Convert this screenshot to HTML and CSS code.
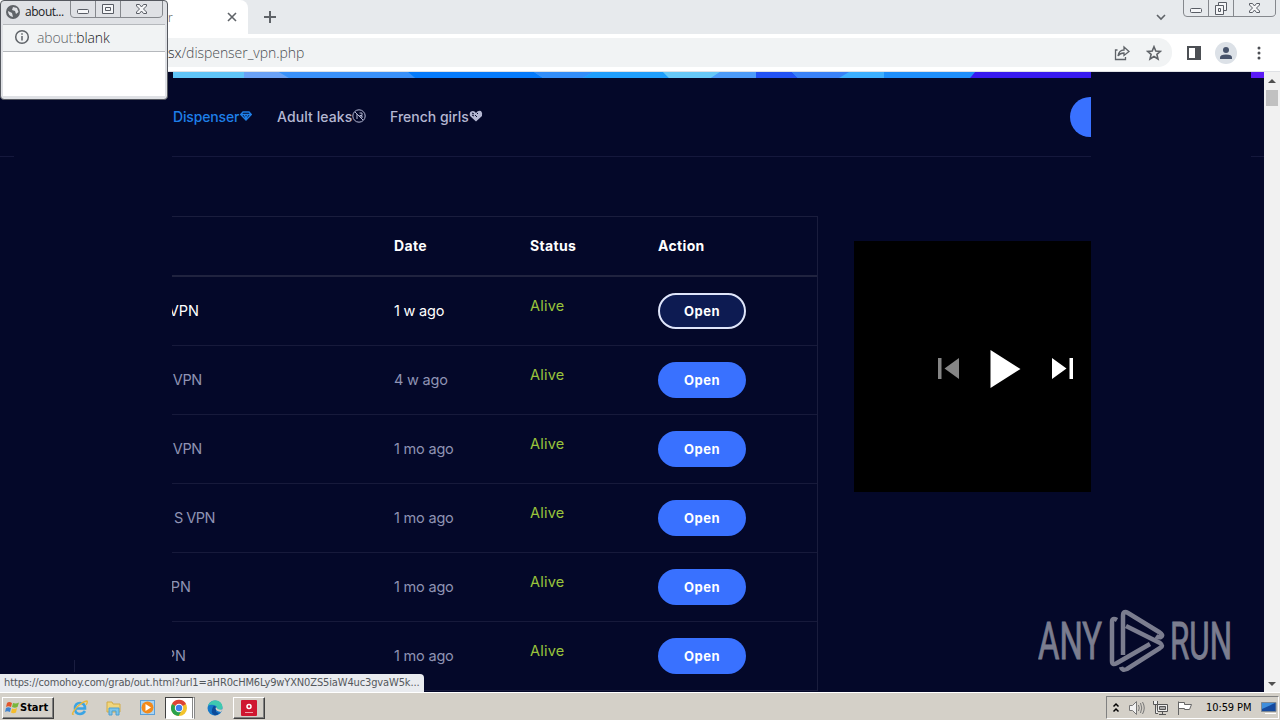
FILE: index.html
```
<!DOCTYPE html>
<html lang="en">
  <head>
    <meta charset="UTF-8" />
    <meta name="viewport" content="width=device-width, initial-scale=1.0" />
    <title>Dispenser</title>
    <link rel="stylesheet" href="styles.css">
  </head>
  <body>
    <header class="tabstrip">
      <div class="tab">
        <span class="tab-title">r</span>
        <svg class="tab-close" width="10" height="10"><path d="M1 1L9 9M9 1L1 9" /></svg>
      </div>
      <svg class="new-tab" width="14" height="14"><path d="M7 1V13M1 7H13" /></svg>
      <svg class="tab-search" width="12" height="8"><path d="M2 2L6 6L10 2" /></svg>
      <div class="win-buttons">
        <svg width="94" height="17">
          <path class="frame" d="M.5 0V13Q.5 16.5 4 16.5H88Q92.500 16.500 92.500 13V0M25.500 0V16M50.500 0V16" />
          <rect class="glyph" x="7.500" y="8.500" width="11" height="4" rx="1" />
          <path class="glyph" d="M35.500 5V2.500H43.500V10.500H41M32.500 5.500H40.500V14.500H32.500ZM35.500 8.500H37.500V11.500H35.500Z" />
          <path class="glyph" d="M66.500 3.500H69.500L71.500 6L73.500 3.500H76.500V5L73.500 8L76.500 11V12.500H73.500L71.500 10L69.500 12.500H66.500V11L69.500 8L66.500 5Z" />
        </svg>
      </div>
    </header>
    <div class="toolbar">
      <div class="omnibox">
        <span class="url"><b>sx</b>/dispenser_vpn.php</span>
        <svg class="share" width="16" height="16"><path d="M3.500 5H1.500V14.500H11.500V12M4 11Q5 5 10 5V2L15 6.500L10 10.500V8Q6 8 4 11Z" /></svg>
        <svg class="star" width="16" height="16"><path d="M8 1.700L9.800 6L14.400 6.400L10.900 9.400L12 14L8 11.500L4 14L5.100 9.400L1.600 6.400L6.200 6Z" /></svg>
      </div>
      <svg class="side-panel" width="14" height="14"><path d="M1 1H13V13H1Z" /><path class="fill" d="M9 1H13V13H9Z" /></svg>
      <div class="avatar">
        <svg width="14" height="14"><circle cx="7" cy="4" r="3" /><path d="M1 13V11.500Q1 8.500 7 8.500T13 11.500V13Z" /></svg>
      </div>
      <svg class="kebab" width="4" height="14"><circle cx="2" cy="2" r="1.500" /><circle cx="2" cy="7" r="1.500" /><circle cx="2" cy="12" r="1.500" /></svg>
    </div>

    <div class="viewport">
      <aside class="side left"><i class="edge"></i><i class="tick"></i></aside>
      <main class="page">
        <svg class="ribbon" width="918" height="6">
          <rect width="918" height="6" fill="#3db0ff" />
          <path d="M0 0H71V6H0Z" fill="#60c5f8" />
          <path d="M71 0H106L116 6H71Z" fill="#6ba2f6" />
          <path d="M106 0H235L242 6H116Z" fill="#3a91fa" />
          <path d="M235 0H361L370 6H242Z" fill="#067bfb" />
          <path d="M361 0H420L410 6H370Z" fill="#348ffa" />
          <path d="M420 0H490L496 6H410Z" fill="#209ffc" />
          <path d="M490 0H547L538 6H496Z" fill="#67c9f8" />
          <path d="M547 0H583V6H538Z" fill="#4d9cfa" />
          <path d="M583 0H619L625 6H583Z" fill="#2353f5" />
          <path d="M619 0H676L666 6H625Z" fill="#3a82f8" />
          <path d="M711 0H802L797 6H711Z" fill="#1e8ffb" />
          <path d="M802 0H918V6H797Z" fill="#381af0" />
        </svg>
        <nav class="nav">
          <a class="active">Dispenser
            <svg width="12" height="10"><path d="M3 1H9L11.300 3.500L6 9L.7 3.500ZM1 3.500H11M4 3.500L6 7L8 3.500" /></svg></a>
          <a class="adult">Adult leaks
            <svg width="14" height="14"><circle cx="7" cy="7" r="6.200" /><path d="M3 3L11 11M5 5V10M7.500 4H10V6.500H7.500M8 7H10V9" /></svg></a>
          <a class="french">French girls
            <svg class="heart" width="14" height="12"><path d="M7 11.500L1 6Q0 3 2 1.500Q5 0 7 3Q9 0 12 1Q14 3 13 6Z" /><path class="cut" d="M3 3L5 4M3 5L5 6M6 5L8 7M8 3L9 4" /></svg></a>
          <button class="pill"></button>
        </nav>
        <div class="content">
          <div class="table">
            <div class="row head"><span></span><span>Date</span><span>Status</span><span>Action</span></div>
            <div class="row hover"><span class="name w27">VPN</span><span class="date">1 w ago</span><span class="status">Alive</span><button class="open">Open</button></div>
            <div class="row"><span class="name w30">VPN</span><span class="date">4 w ago</span><span class="status">Alive</span><button class="open">Open</button></div>
            <div class="row"><span class="name w30">VPN</span><span class="date">1 mo ago</span><span class="status">Alive</span><button class="open">Open</button></div>
            <div class="row"><span class="name w43">S VPN</span><span class="date">1 mo ago</span><span class="status">Alive</span><button class="open">Open</button></div>
            <div class="row"><span class="name w19">PN</span><span class="date">1 mo ago</span><span class="status">Alive</span><button class="open">Open</button></div>
            <div class="row"><span class="name w14">PN</span><span class="date">1 mo ago</span><span class="status">Alive</span><button class="open">Open</button></div>
          </div>
          <div class="player">
            <svg width="237" height="251">
              <path fill="#858585" d="M84 117H87.500V138H84ZM105 117V138L90.500 127.500Z" />
              <path fill="#fff" d="M136.500 109V147L166.500 128ZM198 117V138L212.500 127.500ZM215.500 117H219V138H215.500Z" />
            </svg>
          </div>
        </div>
      </main>
      <aside class="side right"><i class="corner"></i><i class="edge"></i></aside>
      <div class="scrollbar">
        <svg width="16" height="16"><path d="M4 11L8 7L12 11Z" /></svg>
        <div class="thumb"></div>
        <svg class="down" width="16" height="16"><path d="M4 6L8 10L12 6Z" /></svg>
      </div>
      <svg class="watermark" width="200" height="66">
        <text x="0" y="50" textLength="64" lengthAdjust="spacingAndGlyphs">ANY</text>
        <path d="M79 11Q74 8 74 13V52Q74 57 79 54L112 35M85 46V7Q85 1 90 4L121 23Q126 26 123 28Q121 29 118 27M88 17L122 34Q126 37 122 39L89 60Q84 62 83 58" />
        <text x="132" y="50" textLength="62" lengthAdjust="spacingAndGlyphs">RUN</text>
      </svg>
      <div class="link-status">https://comohoy.com/grab/out.html?url1=aHR0cHM6Ly9wYXN0ZS5iaW4uc3gvaW5k...</div>
    </div>

    <footer class="taskbar">
      <div class="start">
        <svg width="16" height="16">
          <path fill="#e2562b" d="M3 3Q5 1 8 3L7 7Q4 5.500 2 7Z" />
          <path fill="#79b63b" d="M9 3Q12 4 15 2.500L13.500 7Q11 8.500 8 7Z" />
          <path fill="#3f83cf" d="M2 8Q4 6.500 7 8L6 12Q3 10.500 1 12Z" />
          <path fill="#f5bd2c" d="M8 8.500Q10 9.500 13 8L12 12.500Q9 14 7 12.500Z" />
        </svg>
        Start
      </div>
      <div class="quick">
        <div class="task">
          <svg width="18" height="18"><path d="M14 12Q12 15 9 15Q4 15 4 9.500T9 4Q14 4 14 9.500H5" fill="none" stroke="#3ba4e4" stroke-width="2.600" /><path d="M3 15Q-1 17 5 9Q12 2 16 2Q17 3 15 6" fill="none" stroke="#e8b83c" stroke-width="1.300" /></svg>
        </div>
        <div class="task">
          <svg width="18" height="18"><path d="M2 3H7L8 5H15V13H2Z" fill="#f1d67c" stroke="#d2ac48" /><path d="M4 16V9H14V16H11V12H7V16Z" fill="#7cc5ea" stroke="#4d9fd0" /></svg>
        </div>
        <div class="task">
          <svg width="18" height="18"><rect x="1.500" y="1.500" width="14" height="14" fill="#a9d4f3" stroke="#5b9fd8" /><circle cx="8.500" cy="8.500" r="6" fill="#f28a1c" /><path d="M6.500 5L12 8.500L6.500 12Z" fill="#fff" /></svg>
        </div>
        <div class="task pressed">
          <svg width="18" height="18"><circle cx="9" cy="9" r="8" fill="#f3c32d" /><path d="M9 9L2 5A8 8 0 0 1 16 5Z" fill="#dd4436" /><path d="M9 9L2 5A8 8 0 0 0 8.500 17L12 11Z" fill="#2ba24c" /><circle cx="9" cy="9" r="4.200" fill="#fff" /><circle cx="9" cy="9" r="3.200" fill="#3e80ee" /></svg>
        </div>
        <div class="task edge-icon">
          <svg width="18" height="18"><circle cx="9" cy="9" r="7.500" fill="#1779c9" /><path d="M2 7Q4 1 10 1.500Q16 2 16.500 8Q16 12 11 11Q12 7 8 6Q4 5 2 7Z" fill="#3fc9b0" /><path d="M11 11Q8 13 13 14Q11 17 8 16Q4 13 7 8Q8 6 10 8Q9 10 11 11Z" fill="#0c4a98" /><path d="M10 8Q8 12 15 13L17 10Q12 12 10 8Z" fill="#d4d0c8" /></svg>
        </div>
        <div class="task raised">
          <svg width="16" height="16"><rect width="16" height="16" rx="1" fill="#cf1730" /><circle cx="8" cy="6.500" r="2" fill="none" stroke="#fff" stroke-width="1.500" /><path d="M4 12.500H12" stroke="#f0a0aa" /></svg>
        </div>
      </div>
      <div class="tray">
        <svg class="chevrons" width="8" height="12"><path d="M1.500 4.500L4 2L6.500 4.500M1.500 9.500L4 7L6.500 9.500" /></svg>
        <svg class="sound" width="18" height="16"><path d="M1.500 5.500H4.500L8.500 1.500V14.500L4.500 10.500H1.500Z" /><path class="wave" d="M10.500 5Q12 8 10.500 11M12.500 3Q15 8 12.500 13M14.500 2Q18 8 14.500 14" /></svg>
        <svg class="net" width="18" height="16"><path d="M5.500 4.500H15.500V11.500H5.500Z" /><path d="M7.500 6.500H13.500V9.500H7.500Z" fill="#aaa" /><path d="M7 14.500H14M10.500 12V14M1.500 1V4.500H5.500V1M3.500 5V13.500H6" /></svg>
        <svg class="flag" width="18" height="16"><path d="M2.500 15V1.500M2.500 2.500H8.500V4.500H15.500L13.500 9.500H8.500V8.500H2.500" /></svg>
        <span class="clock">10:59 PM</span>
        <svg class="desktop" width="16" height="14"><path fill="#164a9e" stroke="#7c8894" d="M.5 1.500H15V10.500H.5Z" /><path fill="#3f8edc" d="M1 2H14L1 8Z" /><path d="M4 12.500H15" stroke="#fff" /></svg>
      </div>
    </footer>

    <!-- small blank window over the browser -->
    <section class="popup">
      <div class="popup-title">
        <svg class="globe" width="14" height="14"><circle cx="7" cy="7" r="7" fill="#5f6368" /><path fill="#dfe1e5" d="M2 6L6 8L7 12Q2 11 2 6ZM7 2L11 3L12.500 7L10 9L9 6L6 5Z" /></svg>
        <span>about...</span>
        <svg class="popup-buttons" width="94" height="18">
          <path class="frame" d="M.5 0V13Q.5 16.500 4 16.500H88Q92.500 16.500 92.500 13V0M25.500 0V16M50.500 0V16" />
          <rect class="glyph" x="7.500" y="8.500" width="11" height="4" rx="1" />
          <path class="glyph" d="M32.500 3.500H43.500V12.500H32.500ZM35.500 6.500H40.500V9.500H35.500Z" />
          <path class="glyph" d="M66.500 3.500H69.500L71.500 6L73.500 3.500H76.500V5L73.500 8L76.500 11V12.500H73.500L71.500 10L69.500 12.500H66.500V11L69.500 8L66.500 5Z" />
        </svg>
      </div>
      <div class="popup-url">
        <svg width="16" height="16"><circle cx="8" cy="8" r="6.300" /><path d="M8 7V11.500M8 4.300V5.800" /></svg>
        <span>about:<b>blank</b></span>
      </div>
      <div class="popup-body"></div>
    </section>
  </body>
</html>
```
FILE: styles.css
```
* {
  box-sizing: border-box;
}
body {
  margin: 0;
  width: 1280px;
  height: 720px;
  overflow: hidden;
  display: flex;
  flex-direction: column;
  font-family: Inter, "Liberation Sans", sans-serif;
  background: #040829;
}
svg {
  display: block;
  flex: none;
  fill: none;
}
button {
  border: 0;
  padding: 0;
  font: inherit;
}
.frame {
  stroke: #85888d;
  fill: none;
}
.glyph {
  stroke: #595d65;
  fill: #f5f6f8;
}

/* browser chrome */
.tabstrip {
  flex: none;
  height: 34px;
  display: flex;
  align-items: flex-start;
  background: #e7eaed;
}
.tab {
  width: 248px;
  height: 34px;
  padding-left: 168px;
  display: flex;
  align-items: center;
  background: #fff;
  border-radius: 0 8px 0 0;
}
.tab-title {
  width: 59px;
  font: 300 12px "Open Sans", sans-serif;
  color: #45494d;
}
.tab-close,
.new-tab,
.tab-search {
  stroke: #5f6368;
  stroke-width: 1.6;
}
.new-tab {
  margin: 10px 0 0 15px;
  stroke-width: 2;
}
.tab-search {
  margin: 13px 0 0 auto;
}
.win-buttons {
  margin: 0 3px 0 16px;
}
.toolbar {
  flex: none;
  height: 38px;
  padding-right: 20px;
  display: flex;
  align-items: center;
  background: #fff;
  border-bottom: 1px solid #dfe1e5;
}
.omnibox {
  width: 1172px;
  height: 29px;
  padding: 0 10px 0 168px;
  display: flex;
  align-items: center;
  background: #f1f3f4;
  border-radius: 0 14px 14px 0;
}
.url {
  font: 300 14px "Open Sans", sans-serif;
  color: #4a4e52;
  letter-spacing: -0.05px;
}
.url b {
  font-weight: 300;
  color: #202124;
}
.share,
.star {
  stroke: #5f6368;
  stroke-width: 1.3;
}
.share {
  margin-left: auto;
}
.star {
  margin-left: 16px;
  margin-right: 0;
  stroke-width: 1.6;
}
.omnibox {
  flex: none;
  padding-right: 10px;
}
.side-panel {
  margin-left: 15px;
  stroke: #4c4f54;
  stroke-width: 2;
}
.side-panel .fill {
  fill: #4c4f54;
}
.avatar {
  flex: none;
  width: 22px;
  height: 22px;
  margin: 0 19px 0 14px;
  padding: 4px;
  border-radius: 50%;
  background: #dce1e7;
}
.avatar svg {
  fill: #47536b;
}
.kebab {
  margin-left: 1px;
  fill: #4c4f54;
}

/* page */
.viewport {
  flex: none;
  height: 620px;
  position: relative;
  display: flex;
}
.side {
  width: 172px;
  height: 620px;
}
.edge {
  display: block;
  width: 14px;
  height: 85px;
  border-bottom: 1px solid #15183c;
}
.tick {
  display: block;
  width: 1px;
  height: 12px;
  margin: 503px 0 0 74px;
  background: #1a1d40;
}
.right {
  width: 173px;
}
.right .corner,
.right .edge {
  margin-left: 160px;
}
.corner {
  display: block;
  width: 13px;
  height: 6px;
  background: #5b1af5;
}
.right .edge {
  height: 79px;
}
.page {
  width: 919px;
  height: 620px;
  overflow: hidden;
}
.ribbon {
  margin-left: 1px;
}
.nav {
  height: 79px;
  padding-left: 1px;
  display: flex;
  align-items: center;
  border-bottom: 1px solid #15183c;
  font-size: 14px;
  font-weight: 500;
  color: #b4b7d2;
}
.nav a {
  display: flex;
  align-items: center;
  padding-bottom: 2px;
  white-space: nowrap;
}
.nav svg {
  stroke: currentColor;
}
.nav .active {
  width: 104px;
  color: #1e7fe8;
  letter-spacing: -0.15px;
}
.active svg {
  margin-left: 1px;
  stroke-width: 1.4;
}
.nav .adult {
  width: 113px;
  letter-spacing: 0.1px;
}
.nav .heart {
  stroke: none;
  fill: currentColor;
}
.heart .cut {
  stroke: #040829;
}
.pill {
  width: 21px;
  height: 40px;
  margin-left: auto;
  border-radius: 20px 0 0 20px;
  background: #3971ff;
}
.content {
  display: flex;
  align-items: flex-start;
  padding-top: 59px;
}
.table {
  width: 646px;
  border: 1px solid #1a1d3d;
  border-width: 1px 1px 0 0;
  font-size: 14.5px;
  color: #8f93b3;
}
.row {
  height: 69px;
  display: grid;
  grid-template-columns: 222px 136px 128px 159px;
  align-items: center;
  border-bottom: 1px solid #171a3b;
}
.row span {
  padding-bottom: 2px;
}
.head {
  height: 60px;
  border-bottom: 2px solid #20233f;
  font-size: 14px;
  font-weight: 700;
  letter-spacing: 0.35px;
  color: #fff;
}
.hover {
  color: #fff;
}
.date {
  letter-spacing: -0.2px;
}
.name {
  display: flex;
  justify-content: flex-end;
  overflow: hidden;
  white-space: nowrap;
}
.w14 {
  width: 14px;
}
.w19 {
  width: 19px;
}
.w27 {
  width: 27px;
}
.w30 {
  width: 30px;
  letter-spacing: -0.3px;
}
.w43 {
  width: 43px;
  letter-spacing: -0.5px;
}
.row .status {
  padding-bottom: 12px;
  letter-spacing: 0.2px;
  color: #9ac43c;
}
.open {
  width: 88px;
  height: 36px;
  border-radius: 18px;
  background: #3971ff;
  color: #fff;
  font-size: 13px;
  font-weight: 700;
  letter-spacing: 0.5px;
}
.hover .open {
  background: #0d1b52;
  border: 2px solid #dfe5fa;
}
.player {
  margin: 25px 0 0 36px;
  width: 237px;
  height: 251px;
  background: #000;
  overflow: hidden;
}
.scrollbar {
  width: 16px;
  height: 620px;
  display: flex;
  flex-direction: column;
  background: #f1f1f1;
}
.scrollbar svg {
  fill: #505050;
}
.thumb {
  width: 12px;
  height: 16px;
  margin: 2px 2px 0;
  background: #c1c1c1;
}
.scrollbar .down {
  margin-top: auto;
}
.watermark {
  position: absolute;
  left: 1038px;
  top: 537px;
  opacity: 0.5;
  stroke: #f2f2f5;
  stroke-width: 4.5;
}
.watermark text {
  font: 400 52px Roboto, sans-serif;
  fill: #f2f2f5;
  stroke-width: 0.8;
}
.link-status {
  position: absolute;
  left: 0;
  bottom: 0;
  width: 424px;
  height: 18px;
  padding-left: 4px;
  overflow: hidden;
  white-space: nowrap;
  background: #e9ebef;
  border-radius: 0 4px 0 0;
  color: #54585c;
  font: 11px/18px "DejaVu Sans Condensed", "DejaVu Sans", sans-serif;
  letter-spacing: -0.13px;
}

/* taskbar */
.taskbar {
  flex: none;
  height: 28px;
  padding: 3px 1px 1px 2px;
  display: flex;
  align-items: center;
  background: #d4d0c8;
  border-top: 1px solid #fff;
  font: 11px "DejaVu Sans Condensed", "DejaVu Sans", sans-serif;
  color: #000;
}
.start,
.raised {
  border: 1px solid;
  border-color: #fff #404040 #404040 #fff;
  box-shadow: inset -1px -1px #808080;
}
.start {
  width: 52px;
  height: 22px;
  padding-left: 1px;
  display: flex;
  align-items: center;
  font-weight: 700;
}
.quick {
  margin-left: 10px;
  display: flex;
  align-items: center;
  gap: 2px;
}
.task {
  width: 32px;
  height: 22px;
  display: flex;
  align-items: center;
  justify-content: center;
}
.pressed {
  background: #fff;
  border: 1px solid;
  border-color: #404040 #fff #fff #404040;
  border-right: 3px double #888;
  width: 30px;
  margin-left: -1px;
}
.edge-icon {
  margin-left: 2px;
}
.raised {
  margin-left: 0;
}
.tray {
  margin-left: auto;
  width: 173px;
  height: 23px;
  padding-left: 5px;
  display: flex;
  align-items: center;
  border: 1px solid;
  border-color: #808080 #fff #fff #808080;
}
.tray .chevrons {
  stroke: #000;
  stroke-width: 1.5;
}
.tray .sound {
  margin-left: 8px;
  stroke: #777;
  fill: #f2f2f2;
}
.sound .wave {
  fill: none;
}
.tray .net {
  margin-left: 6px;
  stroke: #555;
  fill: #eee;
}
.tray .flag {
  margin-left: 6px;
  stroke: #666;
  fill: #fff;
}
.clock {
  margin-left: 12px;
  letter-spacing: -0.1px;
}
.tray .desktop {
  margin-left: auto;
  margin-right: 1px;
  stroke: none;
}

/* popup window */
.popup {
  position: absolute;
  left: 0;
  top: 0;
  width: 168px;
  height: 100px;
  padding: 0 2px 3px;
  display: flex;
  flex-direction: column;
  background: #dfe1e5;
  border: 1px solid #55585f;
  border-radius: 4px;
}
.popup-title {
  height: 23px;
  padding-left: 3px;
  display: flex;
  font: 12px/22px "Open Sans", sans-serif;
  letter-spacing: -0.45px;
  color: #202124;
}
.globe {
  margin: 4px 5px 0 0;
}
.popup-title span {
  width: 45px;
}
.popup-url {
  height: 28px;
  padding: 0 0 2px 11px;
  display: flex;
  align-items: center;
  background: #f1f3f4;
  border: 1px solid #b5b8bc;
  border-width: 1px 0;
  font: 300 14px "Open Sans", sans-serif;
  letter-spacing: -0.15px;
  color: #5f6368;
}
.popup-url svg {
  margin-right: 7px;
  stroke: #5f6368;
  stroke-width: 1.5;
}
.popup-url b {
  font-weight: 300;
  color: #202124;
}
.popup-body {
  flex: 1;
  background: #fff;
}
```
